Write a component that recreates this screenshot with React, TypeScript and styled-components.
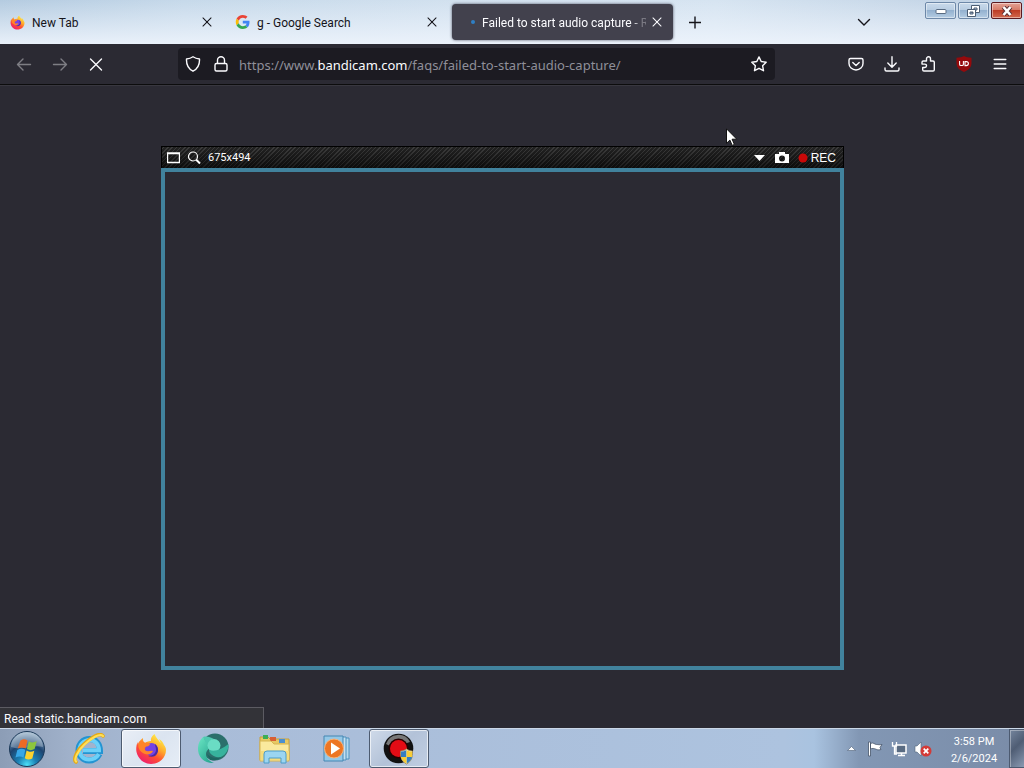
import React from "react";
import styled, { createGlobalStyle, css } from "styled-components";

const GlobalStyle = createGlobalStyle`
  * { box-sizing: border-box; }
  body { margin: 0; background: #2b2a33; font-family: "Noto Sans", "Open Sans", sans-serif; }
  button, input { font: inherit; color: inherit; padding: 0; border: 0; background: none; }
  svg { display: block; flex: none; }
`;

const Desktop = styled.div`
  display: flex;
  flex-direction: column;
  min-height: 100vh;
`;

const TabStrip = styled.header`
  display: flex;
  height: 44px;
  background:
    linear-gradient(180deg, rgba(255, 255, 255, 0) 0%, rgba(238, 244, 252, 0.9) 100%),
    linear-gradient(90deg, #b4cbe0 0%, #c6d9ea 18%, #d2e1ef 45%, #d6e4f1 70%, #bed0e3 100%);
`;

const Tab = styled.div<{ $active?: boolean }>`
  display: flex;
  align-items: center;
  width: 225px;
  height: 44px;
  padding: 0 11px 0 10px;
  gap: 7px;
  color: #15141a;
  ${(p) =>
    p.$active &&
    css`
      width: 221px;
      height: 36px;
      margin: 4px 0 0 2px;
      padding: 0 9px 0 16px;
      gap: 4px;
      border-radius: 4px;
      background: #42414d;
      color: #fbfbfe;
      box-shadow: 0 0 3px rgba(20, 20, 40, 0.7);
    `}
`;

const TabTitle = styled.span<{ $fade?: boolean }>`
  flex: 1;
  min-width: 0;
  overflow: hidden;
  white-space: nowrap;
  font-family: Roboto, "Noto Sans", sans-serif;
  font-size: 12px;
  line-height: 18px;
  padding-top: 2px;
  ${(p) => p.$fade && "mask-image: linear-gradient(90deg, #000 92%, rgba(0, 0, 0, 0.3) 97%);"}
`;

const LoadingDot = styled.span`
  width: 10px;
  display: flex;
  justify-content: center;
  &::before {
    content: "";
    width: 4px;
    height: 4px;
    border-radius: 50%;
    background: #2f7fc4;
  }
`;

const IconButton = styled.button<{ $width?: number; $dim?: boolean }>`
  display: flex;
  align-items: center;
  justify-content: center;
  flex: none;
  width: ${(p) => p.$width ?? 36}px;
  height: 32px;
  opacity: ${(p) => (p.$dim ? 0.4 : 1)};
`;

const StripEnd = styled.div`
  display: flex;
  margin-left: auto;
  gap: 43px;
`;

const WindowControls = styled.div`
  display: flex;
  gap: 2px;
  padding: 2px 2px 0 0;
`;

const WindowButton = styled.button<{ $close?: boolean }>`
  display: flex;
  align-items: center;
  justify-content: center;
  width: 31px;
  height: 17px;
  border: 1px solid ${(p) => (p.$close ? "#5c1a20" : "#6d88a8")};
  border-radius: 2px;
  box-shadow: inset 0 0 0 1px rgba(255, 255, 255, 0.45);
  background: ${(p) =>
    p.$close
      ? "linear-gradient(#e4a295 0%, #d67c69 45%, #bd3c25 50%, #d2684e 100%)"
      : "linear-gradient(#c9daeb 0%, #b8cde2 45%, #94b1cf 50%, #b4cce3 100%)"};
`;

const Toolbar = styled.nav`
  display: flex;
  align-items: center;
  height: 41px;
  padding: 0 6px;
  color: #fbfbfe;
  background: #2b2a33;
  border-bottom: 1px solid #0c0c0d;
`;

const AddressBar = styled.form`
  display: flex;
  align-items: center;
  flex: 1;
  min-width: 0;
  height: 32px;
  margin: 0 63px 0 64px;
  border-radius: 4px;
  background: #1c1b22;
`;

const Address = styled.a`
  flex: 1;
  min-width: 0;
  padding: 2px 0 0 4px;
  overflow: hidden;
  white-space: nowrap;
  font-size: 13px;
  line-height: 20px;
  color: #8f8f99;
  text-decoration: none;
  b { font-weight: 400; color: #fbfbfe; }
`;

const Page = styled.main`
  position: relative;
  display: flex;
  flex-direction: column;
  justify-content: flex-end;
  align-items: flex-start;
  flex: 1;
  min-height: 300px;
  border-top: 1px solid #38373f;
  background: #2b2a33;
`;

const StatusPanel = styled.div`
  width: 264px;
  height: 21px;
  padding: 2px 0 0 4px;
  border: 1px solid #5c5b62;
  border-width: 1px 1px 0 0;
  background: #333338;
  color: #fbfbfe;
  font-family: Roboto, "Noto Sans", sans-serif;
  font-size: 12px;
  line-height: 18px;
`;

const Recorder = styled.section`
  position: absolute;
  inset: 60px 180px 58px 161px;
  display: flex;
  flex-direction: column;
`;

const RecorderBar = styled.div`
  display: flex;
  align-items: center;
  height: 22px;
  padding: 0 7px 0 5px;
  gap: 7px;
  border: 1px solid #000;
  border-bottom: 0;
  color: #fff;
  line-height: 18px;
  background:
    linear-gradient(rgba(255, 255, 255, 0.05), rgba(0, 0, 0, 0.45)),
    repeating-linear-gradient(135deg, #161616 0 1px, #323232 1px 2px, #161616 2px 3px);
`;

const RecorderSize = styled.span`
  margin-right: auto;
  font-family: Roboto, "Noto Sans", sans-serif;
  font-size: 11px;
`;

const RecorderButton = styled.button`
  display: flex;
  align-items: center;
  gap: 3px;
  margin-left: 2px;
  font-family: "Liberation Sans", Arial, sans-serif;
  font-size: 12px;
`;

const CaptureFrame = styled.div`
  flex: 1;
  border: 4px solid #41829d;
`;

const Pointer = styled.svg`
  position: absolute;
  left: 726px;
  top: 42px;
`;

const Taskbar = styled.footer`
  display: flex;
  align-items: stretch;
  height: 40px;
  border-top: 1px solid #cbd8e8;
  background: linear-gradient(90deg, #8c9db6 0, #a0b1ca 70px, #a9bcd8 190px, #adc3df calc(100% - 240px), #a9c3e0 calc(100% - 210px), #8297b4 calc(100% - 165px), #7a8ca8 100%);
`;

const StartButton = styled.button`
  display: flex;
  align-items: center;
  justify-content: center;
  width: 54px;
  margin-right: 5px;
`;

const TaskList = styled.div`
  display: flex;
  gap: 2px;
`;

const TaskButton = styled.button<{ $state?: "active" | "open" }>`
  display: flex;
  align-items: center;
  justify-content: center;
  width: 60px;
  height: 39px;
  border-radius: 3px;
  ${(p) =>
    p.$state &&
    css`
      border: 1px solid #4d5b70;
      box-shadow: inset 0 0 0 1px rgba(255, 255, 255, 0.65);
      background: ${p.$state === "active"
        ? "linear-gradient(135deg, #e9eef6, #dbe4f0 50%, #e6edf6)"
        : "linear-gradient(135deg, #cfdae9, #b3c2d8 50%, #c0cee2)"};
    `}
`;

const Tray = styled.div`
  display: flex;
  align-items: center;
  margin-left: auto;
`;

const TrayButton = styled.button`
  display: flex;
  align-items: center;
  justify-content: center;
  width: 24px;
  height: 24px;
`;

const Clock = styled.time`
  width: 70px;
  margin-left: 4px;
  padding-top: 2px;
  text-align: center;
  color: #fff;
  font-family: Roboto, "Noto Sans", sans-serif;
  font-size: 11px;
  line-height: 17px;
`;

const ShowDesktop = styled.button`
  align-self: stretch;
  width: 15px;
  border: 1px solid #4c5a70;
  border-right: 0;
  background: linear-gradient(135deg, #75859d, #4f5d74 45%, #8a9ab2);
  box-shadow: inset 1px 1px 0 rgba(255, 255, 255, 0.35);
`;

const Stroke = ({ d, size = 16, width = 1.4 }: { d: string; size?: number; width?: number }) => (
  <svg width={size} height={size} viewBox="0 0 16 16" fill="none" stroke="currentColor" strokeWidth={width} strokeLinecap="round" strokeLinejoin="round">
    <path d={d} />
  </svg>
);

const CloseIcon = () => <Stroke size={14} width={1.2} d="M3.4 3.4l9.2 9.2M12.6 3.4l-9.2 9.2" />;

const FirefoxIcon = ({ size, id }: { size: number; id: string }) => (
  <svg width={size} height={size} viewBox="0 0 32 32">
    <defs>
      <linearGradient id={id} x1=".85" y1=".1" x2=".25" y2="1">
        <stop offset="0" stopColor="#fff04a" />
        <stop offset=".35" stopColor="#ffab2b" />
        <stop offset=".62" stopColor="#ff5130" />
        <stop offset="1" stopColor="#ee1a72" />
      </linearGradient>
    </defs>
    <path fill={`url(#${id})`} d="M29 12c-1-3-3-5-5-6 1 2 1.500 3 1.500 4C24 7 21 5 19.500 1c-3 2-4 5-3.500 7-3 0-5 1-6 2C8 9 8 7 8 5 5 7 3 10 3 12l-.5-3C1 13 1 17 1.500 19 3 26 9 31 16 31c8 0 15-6 15-14 0-2-1-4-2-5z" />
    <circle cx="16.500" cy="16.500" r="6.500" fill="#7542e5" />
    <path fill="#4b2aa3" d="M20 11c4 3 4 9 0 12-2 1-5 1-7 0 5 0 8-3 8-6 0-3-1-4-1-6z" />
    <path fill="#ff8429" d="M4 9c2-1 4-1 6 1 2-.5 4 0 5 1-1 3-3 2-5 3-1 2 0 4 2 4 2 1 4-1 6 0-1 3-5 4-8 3-6-2-8-8-6-12z" />
  </svg>
);

const GoogleIcon = () => (
  <svg width="15" height="14" viewBox="-2 0 50 48">
    <path fill="#ea4335" d="M24 9.500c3.500 0 6.700 1.200 9.200 3.600l6.900-6.900C35.900 2.400 30.500 0 24 0 14.600 0 6.500 5.400 2.600 13.200l8 6.200C12.400 13.700 17.700 9.500 24 9.500z" />
    <path fill="#4285f4" d="M47 24.500c0-1.600-.2-3.100-.4-4.500H24v9h12.900c-.6 3-2.200 5.500-4.700 7.200l7.700 6C44.400 38 47 31.800 47 24.500z" />
    <path fill="#fbbc05" d="M10.500 28.600a14.500 14.500 0 010-9.200l-8-6.200a24 24 0 000 21.600z" />
    <path fill="#34a853" d="M24 48c6.500 0 11.900-2.100 15.900-5.800l-7.700-6c-2.200 1.500-4.900 2.300-8.200 2.300-6.300 0-11.600-4.200-13.500-9.900l-8 6.200C6.500 42.600 14.600 48 24 48z" />
  </svg>
);

const UBlockIcon = () => (
  <svg width="16" height="16" viewBox="0 0 16 16">
    <path fill="#940a0c" d="M8 0c2 1.200 4.500 1.700 7.500 1.700V7c0 5-3.500 7.200-7.500 9C4 14.200.5 12 .5 7V1.700C3.500 1.700 6 1.200 8 0z" />
    <path fill="none" stroke="#fff" strokeWidth="1.100" d="M3.600 5v3.200q0 1.300 1.300 1.300h1.200q1.300 0 1.300-1.300V5M9 5.600h1.200q2.200 0 2.200 2t-2.200 2H9z" />
  </svg>
);

const StartIcon = () => (
  <svg width="38" height="38" viewBox="0 0 38 38">
    <defs>
      <radialGradient id="orb" cx=".5" cy=".95" r=".9">
        <stop offset="0" stopColor="#4be0f8" />
        <stop offset=".3" stopColor="#1b80b4" />
        <stop offset=".65" stopColor="#1d4470" />
        <stop offset="1" stopColor="#8fabc4" />
      </radialGradient>
    </defs>
    <circle cx="19" cy="19" r="17.500" fill="url(#orb)" stroke="#1c3958" strokeWidth="1" />
    <path fill="#fff" opacity=".28" d="M3 17a16 15 0 0132 0c-9-3-20 4-32 0z" />
    <path fill="#ec6a25" d="M12.500 10.500c3-2 5-1.500 7 0l-1.800 8c-2.500-1.500-5-1.500-8 0z" />
    <path fill="#8cc63e" d="M20.800 11.300c3 1.700 5 1.500 8-.3l-2.200 8c-3 1.500-5 1.500-7.600 0z" />
    <path fill="#37a7e8" d="M9.300 20c3-1.700 5.500-1.700 8-.2l-1.800 7.700c-2.500-1.500-5-1.500-8 0z" />
    <path fill="#fcd22f" d="M18.600 20.500c3 1.700 5 1.500 7.700.2l-2 7.800c-3 1.500-5 1.300-7.500-.2z" />
  </svg>
);

const ExplorerIcon = () => (
  <svg width="32" height="32" viewBox="0 0 32 32">
    <path fill="none" stroke="#2394d2" strokeWidth="6" d="M26.500 21c-2 4-6 6.500-10.500 6.500C10 27.500 5.500 23 5.500 17S10 6 16.500 6 27 11 27 18H10" />
    <path fill="none" stroke="#6cd0f8" strokeWidth="4" d="M25.800 21c-2 3.500-5 5.500-9.800 5.500C10.500 26.500 6.500 22.500 6.500 17S11 7 16.500 7 26 11 26 17.300H10" />
    <path fill="none" stroke="#e5a916" strokeWidth="3.600" strokeLinecap="round" d="M3 29c-3-2 0-11 8-18S27-1 30 3" />
    <path fill="none" stroke="#ffdf56" strokeWidth="2.200" strokeLinecap="round" d="M3 28.500c-2-2 1-10 8.500-17S27 0 30 3" />
  </svg>
);

const GreenOrbIcon = () => (
  <svg width="34" height="32" viewBox="0 0 34 32">
    <defs>
      <linearGradient id="sea" x1="0" y1="0" x2=".8" y2="1">
        <stop offset="0" stopColor="#6be6c4" />
        <stop offset="1" stopColor="#25a58f" />
      </linearGradient>
    </defs>
    <circle cx="19" cy="14" r="13.500" fill="#2b6f6b" />
    <path fill="url(#sea)" d="M7 4C1 9 0 20 6 26c3 3 8 4.500 12 4-5-2-8-5-8-9 0-3 2-4 4-7z" />
    <path fill="#4fc9b0" d="M7 4c4-1 7 0 11 2-3 1-6 4-6 8z" />
    <circle cx="18" cy="12.500" r="6.500" fill="#6adcc4" />
    <path fill="#37b39d" d="M13 17c7 2 13-1 19.500-6 .5 7-4 12-9 13.500C18 24 13 21 13 17z" />
    <path fill="#1d6661" d="M11 21c4 4 9 5 14 3-3 3-7 4-11 3z" />
  </svg>
);

const FolderIcon = () => (
  <svg width="34" height="32" viewBox="0 0 34 32">
    <path fill="#e7c963" stroke="#c69f3a" d="M2 4h8l2 2h19v21H2z" />
    <path fill="#3cae57" d="M5 2h5v4H5z" />
    <path fill="#d85f34" d="M12 4h6v4h-6z" />
    <path fill="#4a90d0" d="M21 6h6v4h-6z" />
    <path fill="#fae99d" stroke="#d5b553" d="M2 8h11l3 3h15v17H2z" />
    <path fill="#f5dc7c" d="M3 18h28v9H3z" />
    <path fill="#9bd5f1" stroke="#4d9cc9" d="M6 30V21q0-3 3-3h16q3 0 3 3v9h-5v-5H11v5z" />
  </svg>
);

const MediaIcon = () => (
  <svg width="30" height="28" viewBox="0 0 30 28">
    <path fill="#b5d9ee" stroke="#4c91bd" d="M10 3h17v21H10z" />
    <path fill="#c3e0f2" stroke="#4c91bd" d="M6 2h18v23H6z" />
    <path fill="#94c8e7" stroke="#4586b2" d="M2 1h19v25H2z" />
    <circle cx="12" cy="13.500" r="9.500" fill="#ed7623" stroke="#f8b47b" />
    <path fill="#fff" d="M9 7.500l9 6-9 6z" />
  </svg>
);

const BandicamIcon = () => (
  <svg width="32" height="32" viewBox="0 0 32 32">
    <circle cx="15.500" cy="15.500" r="14.800" fill="#111" />
    <path fill="#777" d="M3 11a13 13 0 0124-2l-6 2a9 9 0 00-14 2z" />
    <circle cx="15.500" cy="15.500" r="10" fill="#280000" />
    <circle cx="15.500" cy="15.500" r="8.500" fill="#e40c15" />
    <path fill="#fff" stroke="#a18d55" d="M23.500 16c2 1.500 4 2 6 2 0 7-1 10-6 13-5-3-6-6-6-13 2 0 4-.5 6-2z" />
    <path fill="#347ec2" d="M23.500 17v7H18v-5.500q3 0 5.500-1.500zM23.500 24H29q-1 4-5.500 6.500z" />
    <path fill="#f8cc35" d="M23.500 17q2.500 1.500 5.500 1.500V24h-5.500zM18 24h5.500v6.500Q19 28 18 24z" />
  </svg>
);

export default function App() {
  return (
    <Desktop>
      <GlobalStyle />
      <TabStrip>
        <Tab>
          <FirefoxIcon size={15} id="fox-tab" />
          <TabTitle>New Tab</TabTitle>
          <IconButton $width={14} aria-label="Close New Tab"><CloseIcon /></IconButton>
        </Tab>
        <Tab>
          <GoogleIcon />
          <TabTitle>g - Google Search</TabTitle>
          <IconButton $width={14} aria-label="Close Google Search"><CloseIcon /></IconButton>
        </Tab>
        <Tab $active>
          <LoadingDot />
          <TabTitle $fade>Failed to start audio capture - R</TabTitle>
          <IconButton $width={14} aria-label="Close current tab"><CloseIcon /></IconButton>
        </Tab>
        <IconButton $width={44} aria-label="New tab">
          <svg width="16" height="44" viewBox="0 0 16 44" stroke="#15141a" strokeWidth="1.400">
            <path d="M2 28.500h12M8 22.500v12" />
          </svg>
        </IconButton>
        <StripEnd>
          <IconButton aria-label="List all tabs">
            <svg width="16" height="44" viewBox="0 0 16 44" fill="none" stroke="#15141a" strokeWidth="1.400" strokeLinecap="round">
              <path d="M2.500 25.500L8 31l5.500-5.500" />
            </svg>
          </IconButton>
          <WindowControls>
            <WindowButton aria-label="Minimize">
              <svg width="12" height="6"><rect x="1" y="1.500" width="10" height="4" rx="1" fill="#fff" stroke="#586b82" /></svg>
            </WindowButton>
            <WindowButton aria-label="Restore">
              <svg width="13" height="12" fill="#fff" stroke="#4c5d73">
                <path fillRule="evenodd" d="M4.500.5h8v7h-8zM7 3h3v2H7z" />
                <path fillRule="evenodd" d="M.5 4.500h8v7h-8zM3 7h3v2H3z" />
              </svg>
            </WindowButton>
            <WindowButton $close aria-label="Close">
              <svg width="12" height="10" fill="none">
                <path stroke="#5d3034" strokeWidth="4.500" d="M2.500 1l7 8M9.500 1l-7 8" />
                <path stroke="#fff" strokeWidth="2.600" d="M2.500 1l7 8M9.500 1l-7 8" />
              </svg>
            </WindowButton>
          </WindowControls>
        </StripEnd>
      </TabStrip>

      <Toolbar>
        <IconButton $dim aria-label="Back"><Stroke d="M14.500 8.500h-13M7 3L1.500 8.500 7 14" /></IconButton>
        <IconButton $dim aria-label="Forward"><Stroke d="M1.500 8.500h13M9 3l5.500 5.500L9 14" /></IconButton>
        <IconButton aria-label="Stop"><Stroke d="M2.500 3l11 11M13.500 3l-11 11" /></IconButton>
        <AddressBar>
          <IconButton $width={29} type="button" aria-label="Tracking protection">
            <Stroke d="M8 .8c2 1.400 4.200 2 6.500 2.200C14.800 9 12.500 13 8 15.200 3.500 13 1.200 9 1.500 3 3.800 2.800 6 2.200 8 .8z" />
          </IconButton>
          <IconButton $width={28} type="button" aria-label="Connection secure">
            <Stroke d="M3.500 7.500h9q1.500 0 1.500 1.500v4.500q0 1.500-1.500 1.500h-9Q2 15 2 13.500V9q0-1.500 1.500-1.500zM4.500 7V4.200a3.500 3.500 0 017 0V7" />
          </IconButton>
          <Address href="#">https://www.<b>bandicam.com</b>/faqs/failed-to-start-audio-capture/</Address>
          <IconButton $width={32} type="button" aria-label="Bookmark this page">
            <Stroke d="M8 .9l2.200 4.600 5 .7-3.600 3.500.9 5L8 12.300l-4.500 2.400.9-5L.8 6.200l5-.7z" />
          </IconButton>
        </AddressBar>
        <IconButton aria-label="Save to Pocket"><Stroke d="M2.500 2.500h11q1.500 0 1.500 1.500v3.500a7 6.500 0 01-14 0V4q0-1.500 1.500-1.500zM4.800 6.500L8 9.600l3.200-3.100" /></IconButton>
        <IconButton aria-label="Downloads"><Stroke d="M8 .8v10M3.800 7L8 11.200 12.200 7M1 12v1.500Q1 15 2.500 15h11q1.500 0 1.500-1.500V12" /></IconButton>
        <IconButton aria-label="Extensions"><Stroke d="M6.500 5V2.800a2 2 0 014 0V5H13q1.300 0 1.300 1.300v7.400Q14.300 15 13 15H4q-1.300 0-1.300-1.300v-2.200h2.100a1.700 1.700 0 000-3.400H2V6.300Q2 5 3.300 5z" /></IconButton>
        <IconButton aria-label="uBlock Origin"><UBlockIcon /></IconButton>
        <IconButton aria-label="Menu"><Stroke d="M2.200 3.500h11.600M2.200 8h11.600M2.200 12.500h11.600" /></IconButton>
      </Toolbar>

      <Page>
        <StatusPanel>Read static.bandicam.com</StatusPanel>
        <Recorder>
          <RecorderBar>
            <svg width="13" height="12" fill="none" stroke="#fff"><path d="M.5 1.500h12v9H.5zM0 1h13" strokeWidth="1.400" /></svg>
            <svg width="14" height="14" fill="none" stroke="#fff"><circle cx="6" cy="5.500" r="4.500" strokeWidth="1.200" /><path strokeWidth="2" d="M9 8.500l4 4" /></svg>
            <RecorderSize>675x494</RecorderSize>
            <RecorderButton aria-label="Options"><svg width="12" height="6" fill="#fff"><path d="M0 0h11L5.500 6z" /></svg></RecorderButton>
            <RecorderButton aria-label="Screenshot">
              <svg width="14" height="12" viewBox="0 0 14 12" fill="#fff"><path fillRule="evenodd" d="M0 2h4V0h6v2h4v9H0zM7 3.500a3 3 0 100 6 3 3 0 000-6z" /></svg>
            </RecorderButton>
            <RecorderButton><svg width="10" height="10"><circle cx="5" cy="5" r="4.500" fill="#c90808" /></svg>REC</RecorderButton>
          </RecorderBar>
          <CaptureFrame />
        </Recorder>
        <Pointer width="12" height="19" viewBox="0 0 12 19">
          <path fill="#fff" stroke="#111" d="M.5.8v14.500l3.400-3.200 2.300 5.300 2.200-1-2.300-5.200h4.700z" />
        </Pointer>
      </Page>

      <Taskbar>
        <StartButton aria-label="Start"><StartIcon /></StartButton>
        <TaskList>
          <TaskButton aria-label="Internet Explorer"><ExplorerIcon /></TaskButton>
          <TaskButton $state="active" aria-label="Firefox"><FirefoxIcon size={32} id="fox-task" /></TaskButton>
          <TaskButton aria-label="Web browser"><GreenOrbIcon /></TaskButton>
          <TaskButton aria-label="File Explorer"><FolderIcon /></TaskButton>
          <TaskButton aria-label="Media Player"><MediaIcon /></TaskButton>
          <TaskButton $state="open" aria-label="Bandicam"><BandicamIcon /></TaskButton>
        </TaskList>
        <Tray>
          <TrayButton aria-label="Show hidden icons"><svg width="9" height="5"><path fill="#fff" stroke="#4e5f77" strokeWidth=".6" d="M.5 4.500h8L4.500.5z" /></svg></TrayButton>
          <TrayButton aria-label="Action Center">
            <svg width="16" height="16" fill="#fff" stroke="#46546a" strokeWidth=".8"><path d="M1.500 1h2v14h-2zM3.500 2.500c3-1.500 4 1 6 1s3 .5 5.500 0l-2 3 1 2c-3 1-4 0-5.500-.5s-3-1-5 0z" /></svg>
          </TrayButton>
          <TrayButton aria-label="Network">
            <svg width="16" height="16" fill="none"><path fill="#596b82" stroke="#fff" strokeWidth="1.500" d="M5 4h10v8H5zM7 14.500h7M10.500 12v2.500" /><path stroke="#fff" strokeWidth="1.300" d="M1.500 1v4h4V1M3.500 5v8H6" /></svg>
          </TrayButton>
          <TrayButton aria-label="Volume">
            <svg width="18" height="16" viewBox="0 0 18 16"><path fill="#fff" stroke="#53647b" strokeWidth=".6" d="M1 5h2l4-4v14l-4-4H1z" /><circle cx="12" cy="10" r="5.500" fill="#d43a36" /><path stroke="#fff" strokeWidth="1.700" d="M9.700 7.700l4.600 4.600M14.300 7.700l-4.600 4.600" /></svg>
          </TrayButton>
          <Clock>3:58 PM<br />2/6/2024</Clock>
          <ShowDesktop aria-label="Show desktop" />
        </Tray>
      </Taskbar>
    </Desktop>
  );
}
